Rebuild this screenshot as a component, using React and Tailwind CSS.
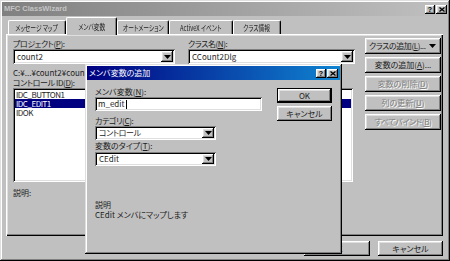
const F = "font-['Noto_Sans_CJK_JP',sans-serif] [font-feature-settings:'palt']";
const RAISED = "shadow-[inset_-1px_-1px_0_#000,inset_1px_1px_0_#fff,inset_-2px_-2px_0_#808080,inset_2px_2px_0_#dfdfdf]";
const WIN = "shadow-[inset_-1px_-1px_0_#000,inset_1px_1px_0_#dfdfdf,inset_-2px_-2px_0_#808080,inset_2px_2px_0_#fff]";
const SUNK = "shadow-[inset_1px_1px_0_#808080,inset_-1px_-1px_0_#fff,inset_2px_2px_0_#000,inset_-2px_-2px_0_#dfdfdf]";
const PANEL = "shadow-[inset_1px_1px_0_#fff,inset_-1px_-1px_0_#000,inset_-2px_-2px_0_#808080,inset_2px_2px_0_#dfdfdf]";

function U({ children }) {
  return <span className="underline underline-offset-[1px]">{children}</span>;
}

function Arrow() {
  return (
    <svg width="7" height="4" viewBox="0 0 7 4">
      <path d="M0 0h7L3.5 4z" fill="#000" />
    </svg>
  );
}

function Combo({ className, children }) {
  return (
    <div className={`flex items-stretch bg-white p-[2px] ${SUNK} ${className}`}>
      <div className="flex-1 flex items-center pl-[2px] overflow-hidden whitespace-nowrap">{children}</div>
      <div className={`w-[12px] flex items-center justify-center bg-[#c0c0c0] ${RAISED}`}>
        <Arrow />
      </div>
    </div>
  );
}

function Btn({ className, children, disabled, def }) {
  const txt = disabled ? "text-[#808080] [text-shadow:1px_1px_0_#fff]" : "text-[#1c1c1c]";
  if (def) {
    return (
      <div className={`border border-black ${className}`}>
        <div className={`w-full h-full flex items-center justify-center bg-[#c0c0c0] ${RAISED} ${txt}`}>{children}</div>
      </div>
    );
  }
  return (
    <div className={`flex items-center justify-center bg-[#c0c0c0] whitespace-nowrap ${RAISED} ${txt} ${className}`}>
      {children}
    </div>
  );
}

function TitleButtons() {
  return (
    <div className="ml-auto flex gap-[1px]">
      <div className={`w-[10px] h-[9px] bg-[#c0c0c0] flex items-center justify-center ${RAISED}`}>
        <span className="font-['Liberation_Sans',sans-serif] font-bold text-[7px] leading-[7px] text-black">?</span>
      </div>
      <div className={`w-[11px] h-[9px] bg-[#c0c0c0] flex items-center justify-center ${RAISED}`}>
        <svg width="6" height="5" viewBox="0 0 6 5">
          <path d="M0.5 0.5L5.5 4.5M5.5 0.5L0.5 4.5" stroke="#000" strokeWidth="1.3" />
        </svg>
      </div>
    </div>
  );
}

function Tab({ className, children, active }) {
  return (
    <div
      className={`flex items-center justify-center whitespace-nowrap bg-[#c0c0c0] border-t border-l border-white rounded-tl-[2px] rounded-tr-[2px] border-r border-r-black shadow-[inset_-1px_0_0_#808080] ${
        active ? "h-[18px] mb-[-1px] z-10 relative" : "h-[14px]"
      } ${className}`}
    >
      <span className="inline-block scale-x-[0.72]">{children}</span>
    </div>
  );
}

export default function App() {
  return (
    <div className={`relative w-[450px] h-[261px] overflow-hidden bg-[#c0c0c0] text-[#1c1c1c] text-[8px] leading-[10px] ${F} ${WIN}`}>
      <div className="flex flex-col p-[2px] h-full">
        {/* title bar */}
        <div className="flex items-center h-[14px] pl-[2px] pr-[1px] bg-[linear-gradient(to_right,#808080,#c0c0c0)]">
          <span className="font-['Liberation_Sans',sans-serif] font-bold text-[7.5px] text-[#c4c4c4]">MFC ClassWizard</span>
          <TitleButtons />
        </div>

        {/* tabs */}
        <div className="flex items-end h-[18px] pl-[6px]">
          <Tab className="w-[58px]">メッセージ マップ</Tab>
          <Tab className="w-[51px]" active>メンバ変数</Tab>
          <Tab className="w-[52px]">オートメーション</Tab>
          <Tab className="w-[64px]">ActiveX イベント</Tab>
          <Tab className="w-[48px]">クラス情報</Tab>
        </div>

        {/* tab panel */}
        <div className={`ml-[4px] w-[437px] h-[202px] flex pl-[7px] pt-[4px] ${PANEL}`}>
          <div className="w-[342px] flex flex-col">
            <div className="flex gap-[13px]">
              <div className="w-[162px] flex flex-col">
                <div className="h-[11px] leading-[11px] tracking-[-0.4px]">プロジェクト(<U>P</U>):</div>
                <Combo className="h-[15px]">count2</Combo>
              </div>
              <div className="w-[167px] flex flex-col">
                <div className="h-[11px] leading-[11px] tracking-[-0.4px]">クラス名(<U>N</U>):</div>
                <Combo className="h-[15px]">CCount2Dlg</Combo>
              </div>
            </div>
            <div className="mt-[4px] h-[10px] leading-[10px] whitespace-nowrap">C:¥...¥count2¥count2Dlg.h, C:¥...¥count2¥count2Dlg.cpp</div>
            <div className="h-[10px] leading-[10px] tracking-[-0.4px]">コントロール ID(<U>D</U>):</div>
            <div className={`w-[340px] h-[94px] bg-white p-[2px] ${SUNK}`}>
              <div className="h-[9px] leading-[9px] pl-[1px] tracking-[-0.5px]">IDC_BUTTON1</div>
              <div className="h-[9px] leading-[9px] pl-[1px] tracking-[-0.5px] bg-[#000080] text-white">IDC_EDIT1</div>
              <div className="h-[9px] leading-[9px] pl-[1px] tracking-[-0.5px]">IDOK</div>
            </div>
            <div className="mt-[6px] h-[10px]">説明:</div>
          </div>
          <div className="ml-[10px] w-[76px] flex flex-col gap-[3px]">
            <Btn className="h-[16px] !justify-start pl-[4px]">
              <span className="tracking-[-0.4px]">クラスの追加(<U>L</U>)...</span>
              <span className="ml-auto mr-[5px] flex">
                <Arrow />
              </span>
            </Btn>
            <Btn className="h-[16px]">変数の追加(<U>A</U>)...</Btn>
            <Btn className="h-[16px]" disabled>変数の削除(<U>D</U>)</Btn>
            <Btn className="h-[16px]" disabled>列の更新(<U>U</U>)</Btn>
            <Btn className="h-[16px]" disabled>
              <span className="tracking-[-0.4px]">すべてバインド(<U>B</U>)</span>
            </Btn>
          </div>
        </div>

        {/* bottom buttons */}
        <div className="flex justify-end gap-[8px] mt-[5px] pr-[5px]">
          <Btn className="w-[66px] h-[15px]">OK</Btn>
          <Btn className="w-[65px] h-[15px]">キャンセル</Btn>
        </div>
      </div>

      {/* dialog window */}
      <div className={`absolute left-[85px] top-[64px] w-[257px] h-[190px] bg-[#c0c0c0] p-[2px] flex flex-col ${WIN}`}>
        <div className="h-[14px] flex items-center pl-[2px] pr-[2px] bg-[linear-gradient(to_right,#000080,#1084d0)]">
          <span className="text-white text-[8px]">メンバ変数の追加</span>
          <TitleButtons />
        </div>
        <div className="flex pl-[8px] pt-[7px]">
          <div className="w-[167px] flex flex-col">
            <div className="h-[10px] leading-[10px]">メンバ変数(<U>N</U>):</div>
            <div className={`h-[14px] bg-white p-[2px] pl-[3px] flex items-center ${SUNK}`}>
              <span>m_edit</span>
              <span className="w-[1px] h-[9px] bg-black ml-[1px]" />
            </div>
            <div className="mt-[5px] h-[10px] leading-[10px] tracking-[-0.4px]">カテゴリ(<U>C</U>):</div>
            <Combo className="h-[14px] w-[121px]">
              <span className="tracking-[-0.4px]">コントロール</span>
            </Combo>
            <div className="mt-[1px] h-[10px] leading-[10px]">変数のタイプ(<U>T</U>):</div>
            <Combo className="mt-[1px] h-[14px] w-[121px]">CEdit</Combo>
            <div className="mt-[34px] h-[10px] leading-[10px]">説明</div>
            <div className="h-[10px] leading-[10px] whitespace-nowrap">CEdit メンバにマップします</div>
          </div>
          <div className="ml-[15px] w-[55px] mt-[1px] flex flex-col gap-[3px]">
            <Btn className="h-[15px]" def>OK</Btn>
            <Btn className="h-[15px]">キャンセル</Btn>
          </div>
        </div>
      </div>
    </div>
  );
}
